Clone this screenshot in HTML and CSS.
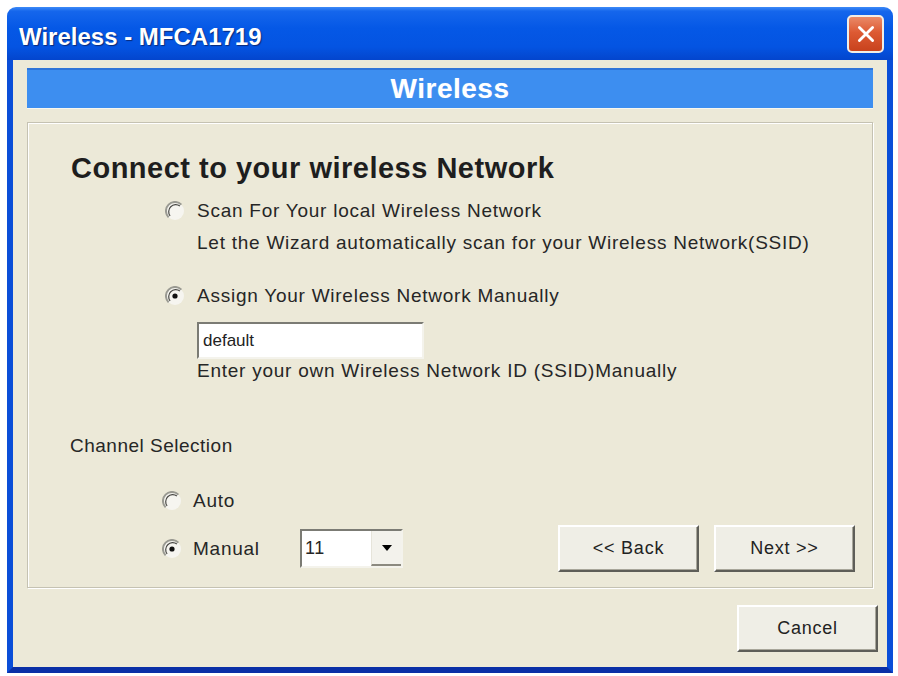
FILE: index.html
```html
<!DOCTYPE html>
<html lang="en">
<head>
  <meta charset="UTF-8" />
  <title>Wireless - MFCA1719</title>
  <link rel="stylesheet" href="styles.css">
</head>
<body>
  <div class="window">
    <div class="titlebar">
      <span class="title">Wireless - MFCA1719</span>
      <button class="close" title="Close">
        <svg viewBox="0 0 20 20" width="22" height="22"><path d="M4 4L16 16M16 4L4 16" stroke="#fff" stroke-width="2.6" stroke-linecap="round"/></svg>
      </button>
    </div>

    <div class="client">
      <div class="banner">Wireless</div>

      <div class="panel">
        <h1>Connect to your wireless Network</h1>

        <div class="opts">
          <label class="row first">
            <svg class="radio" viewBox="0 0 20 20"><circle cx="10" cy="10" r="9" fill="#f6f5f0"/><path d="M3.6 16.4A9 9 0 0 1 16.4 3.6" stroke="#9a9a92" stroke-width="2" fill="none"/><path d="M5.1 14.9A7 7 0 0 1 14.9 5.1" stroke="#4a4a46" stroke-width="1.2" fill="none"/></svg>
            Scan For Your local Wireless Network
          </label>
          <div class="row note">Let the Wizard automatically scan for your Wireless Network(SSID)</div>

          <label class="row gap">
            <svg class="radio" viewBox="0 0 20 20"><circle cx="10" cy="10" r="9" fill="#f6f5f0"/><path d="M3.6 16.4A9 9 0 0 1 16.4 3.6" stroke="#9a9a92" stroke-width="2" fill="none"/><path d="M5.1 14.9A7 7 0 0 1 14.9 5.1" stroke="#4a4a46" stroke-width="1.2" fill="none"/><circle cx="10" cy="10" r="2.6" fill="#111"/></svg>
            Assign Your Wireless Network Manually
          </label>
          <input class="ssid" type="text" value="default" />
          <div class="row note tight">Enter your own Wireless Network ID (SSID)Manually</div>
        </div>

        <div class="row chan-title">Channel Selection</div>

        <label class="row chan auto">
          <svg class="radio" viewBox="0 0 20 20"><circle cx="10" cy="10" r="9" fill="#f6f5f0"/><path d="M3.6 16.4A9 9 0 0 1 16.4 3.6" stroke="#9a9a92" stroke-width="2" fill="none"/><path d="M5.1 14.9A7 7 0 0 1 14.9 5.1" stroke="#4a4a46" stroke-width="1.2" fill="none"/></svg>
          Auto
        </label>

        <div class="row chan manual">
          <svg class="radio" viewBox="0 0 20 20"><circle cx="10" cy="10" r="9" fill="#f6f5f0"/><path d="M3.6 16.4A9 9 0 0 1 16.4 3.6" stroke="#9a9a92" stroke-width="2" fill="none"/><path d="M5.1 14.9A7 7 0 0 1 14.9 5.1" stroke="#4a4a46" stroke-width="1.2" fill="none"/><circle cx="10" cy="10" r="2.6" fill="#111"/></svg>
          <span class="chan-lbl">Manual</span>
          <div class="select">
            <span class="val">11</span>
            <span class="drop"><svg viewBox="0 0 12 8" width="12" height="8"><path d="M1 1h10L6 7z" fill="#000"/></svg></span>
          </div>
          <div class="nav">
            <button class="btn">&lt;&lt; Back</button>
            <button class="btn">Next &gt;&gt;</button>
          </div>
        </div>
      </div>

      <div class="footer">
        <button class="btn">Cancel</button>
      </div>
    </div>
  </div>
</body>
</html>
```

FILE: styles.css
```css
body {
  margin: 0;
  background: #fff;
  font-family: "Liberation Sans", Arial, sans-serif;
  color: #222;
}

.window {
  margin: 7px 0 0 7px;
  width: 886px;
  height: 666px;
  display: flex;
  flex-direction: column;
}

/* XP style caption */
.titlebar {
  height: 53px;
  flex: none;
  display: flex;
  align-items: flex-start;
  padding: 0 9px 0 12px;
  border-radius: 9px 9px 0 0;
  background: linear-gradient(to bottom, #3d8af7 0%, #1566ec 8%, #0558e6 40%, #0454e2 75%, #0345cd 100%);
}
.title {
  margin-top: 16px;
  font-size: 24px;
  line-height: 28px;
  font-weight: bold;
  color: #fff;
  text-shadow: 1px 1px 1px #0a2a78;
}
.close {
  margin: 8px 0 0 auto;
  width: 37px;
  height: 38px;
  padding: 0;
  border: 2px solid #f2ede6;
  border-radius: 5px;
  background: linear-gradient(to bottom, #ea8a68 0%, #dd5a33 45%, #c8421d 100%);
  display: flex;
  align-items: center;
  justify-content: center;
}

.client {
  flex: 1;
  background: #ece9d8;
  border: 6px solid #0a4ed8;
  border-top: 0;
  border-bottom-color: #0a2fa6;
  padding: 8px 14px 0;
}

.banner {
  height: 40px;
  box-sizing: border-box;
  border-top: 2px solid #2f74d8;
  background: #3d8ef0;
  box-shadow: 0 1px 0 #f8f7ef;
  color: #fff;
  text-align: center;
  font-size: 28px;
  font-weight: bold;
  letter-spacing: .5px;
  line-height: 37px;
  text-shadow: 0 0 1px #6aa8f4;
}

.panel {
  margin-top: 14px;
  border: 1px solid #c5c2b2;
  box-shadow: inset 1px 1px 0 #fff, 1px 1px 0 #fff;
  padding: 0 17px 15px 0;
}
.panel h1 {
  margin: 27px 0 0 43px;
  font-size: 29px;
  line-height: 36px;
  letter-spacing: .5px;
  color: #1e1e1e;
}

.row {
  display: flex;
  align-items: center;
  gap: 12px;
  font-size: 19px;
  line-height: 24px;
  letter-spacing: .75px;
  color: #262626;
}
.radio {
  width: 20px;
  height: 20px;
  flex: none;
}

.opts { margin-left: 137px; }
.first { margin-top: 13px; }
.note { margin: 8px 0 0 32px; }
.note.tight { margin-top: 0; }
.gap { margin-top: 29px; }

.ssid {
  display: block;
  margin: 14px 0 0 32px;
  width: 227px;
  height: 37px;
  box-sizing: border-box;
  padding: 0 4px;
  border: 2px solid;
  border-color: #7b7b74 #f4f3ec #f4f3ec #7b7b74;
  background: #fff;
  font: 17px "Liberation Sans", Arial, sans-serif;
  color: #222;
}

.chan-title {
  margin: 51px 0 0 42px;
  letter-spacing: .5px;
}
.chan {
  margin-left: 134px;
  gap: 11px;
}
.auto { margin-top: 31px; }
.manual {
  margin-top: 12px;
  height: 47px;
}
.chan-lbl { width: 96px; }

.select {
  width: 103px;
  height: 39px;
  box-sizing: border-box;
  display: flex;
  align-items: stretch;
  border: 2px solid;
  border-color: #7b7b74 #f4f3ec #f4f3ec #7b7b74;
  background: #fff;
}
.select .val {
  flex: 1;
  padding-left: 3px;
  font-size: 18px;
  line-height: 35px;
  letter-spacing: .5px;
}
.select .drop {
  width: 29px;
  display: flex;
  align-items: center;
  justify-content: center;
  background: #f3f2ec;
  border-left: 1px solid #e6e4da;
  border-bottom: 2px solid #8c8a80;
}

.nav {
  margin-left: auto;
  display: flex;
  gap: 15px;
}

.btn {
  width: 141px;
  height: 47px;
  padding: 0;
  background: #efeee6;
  border: 2px solid;
  border-color: #fff #5e5e58 #5e5e58 #fff;
  box-shadow: inset -1px -1px 0 #a8a69a;
  font: 18px "Liberation Sans", Arial, sans-serif;
  letter-spacing: .75px;
  color: #222;
}

.footer {
  margin: 17px -5px 0 0;
  display: flex;
  justify-content: flex-end;
}
```
